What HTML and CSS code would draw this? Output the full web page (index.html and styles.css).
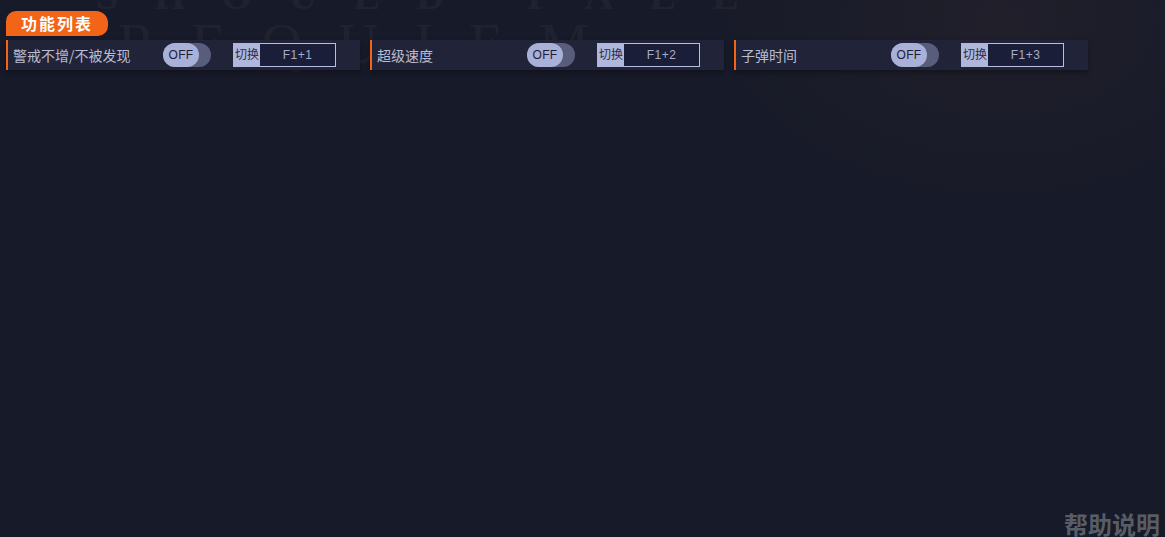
FILE: index.html
```html
<!DOCTYPE html>
<html lang="zh-CN">
<head>
    <meta charset="UTF-8">
    <meta name="viewport" content="width=device-width, initial-scale=1.0">
    <title>功能列表</title>
    <link rel="stylesheet" href="styles.css">
</head>
<body>
    <div class="backdrop" aria-hidden="true">
        <div class="backdrop-line1">SHOULD FALL</div>
        <div class="backdrop-line2">REQUIEM</div>
    </div>

    <div class="page">
        <div class="section-title">功能列表</div>

        <div class="feature-list">
            <div class="feature-item">
                <span class="feature-name">警戒不增/不被发现</span>
                <div class="switch"><span class="switch-knob">OFF</span></div>
                <div class="hotkey">
                    <span class="hotkey-label">切换</span>
                    <span class="hotkey-value">F1+1</span>
                </div>
            </div>
            <div class="feature-item">
                <span class="feature-name">超级速度</span>
                <div class="switch"><span class="switch-knob">OFF</span></div>
                <div class="hotkey">
                    <span class="hotkey-label">切换</span>
                    <span class="hotkey-value">F1+2</span>
                </div>
            </div>
            <div class="feature-item">
                <span class="feature-name">子弹时间</span>
                <div class="switch"><span class="switch-knob">OFF</span></div>
                <div class="hotkey">
                    <span class="hotkey-label">切换</span>
                    <span class="hotkey-value">F1+3</span>
                </div>
            </div>
        </div>
    </div>

    <div class="help-link">帮助说明</div>
</body>
</html>
```
FILE: styles.css
```css
* {
    box-sizing: border-box;
}

html,
body {
    height: 100%;
}

body {
    margin: 0;
    overflow: hidden;
    position: relative;
    background:
        radial-gradient(ellipse 300px 190px at 1000px 20px, rgba(62, 48, 50, 0.24), transparent),
        #171a28;
    font-family: "Microsoft YaHei", "Noto Sans CJK SC", sans-serif;
}

/* faint game art behind the list */
.backdrop {
    position: absolute;
    top: 0;
    left: 0;
    right: 0;
    height: 100px;
    color: #fff;
    opacity: 0.03;
    font-family: "Liberation Serif", serif;
    white-space: nowrap;
    overflow: hidden;
}

.backdrop-line1 {
    position: absolute;
    top: -28px;
    left: 96px;
    font-size: 40px;
    font-weight: 700;
    letter-spacing: 36px;
}

.backdrop-line2 {
    position: absolute;
    top: 12px;
    left: 118px;
    font-size: 56px;
    letter-spacing: 36px;
}

.page {
    position: relative;
    padding: 11px 0 0 6px;
}

.section-title {
    width: 102px;
    height: 25px;
    padding-left: 15px;
    background: #f26418;
    border-radius: 10px 12px 10px 0;
    color: #fff;
    font-size: 16px;
    font-weight: 700;
    line-height: 25px;
    letter-spacing: 2px;
    white-space: nowrap;
}

.feature-list {
    display: flex;
    gap: 10px;
    margin-top: 4px;
}

.feature-item {
    display: flex;
    align-items: center;
    width: 354px;
    height: 30px;
    padding-left: 5px;
    background: #212438;
    border-left: 2px solid #f26418;
    box-shadow: 0 3px 5px rgba(0, 0, 0, 0.3);
}

.feature-name {
    width: 150px;
    margin-bottom: 1px;
    color: #b9bdd3;
    font-size: 14px;
    white-space: nowrap;
}

.switch {
    width: 48px;
    height: 24px;
    background: #585d7c;
    border-radius: 12px;
}

.switch-knob {
    display: block;
    width: 36px;
    height: 24px;
    background: #aab1d8;
    border-radius: 12px;
    color: #1e2136;
    font-family: "Liberation Sans", sans-serif;
    font-size: 12px;
    line-height: 25px;
    letter-spacing: 0.3px;
    text-align: center;
}

.hotkey {
    display: flex;
    height: 24px;
    margin-left: 22px;
}

.hotkey-label {
    width: 27px;
    padding-left: 2px;
    background: #b0b7dd;
    color: #2a2d45;
    font-size: 12px;
    line-height: 22px;
    white-space: nowrap;
}

.hotkey-value {
    width: 76px;
    background: #1b1e38;
    border: 1px solid #b8bee0;
    border-left: 0;
    color: #a8adc6;
    font-family: "Liberation Sans", sans-serif;
    font-size: 12px;
    line-height: 22px;
    text-align: center;
    letter-spacing: 0.5px;
}

.help-link {
    position: absolute;
    right: 5px;
    bottom: 0;
    color: #585c66;
    font-size: 24px;
    font-weight: 700;
    line-height: 26px;
}
```
